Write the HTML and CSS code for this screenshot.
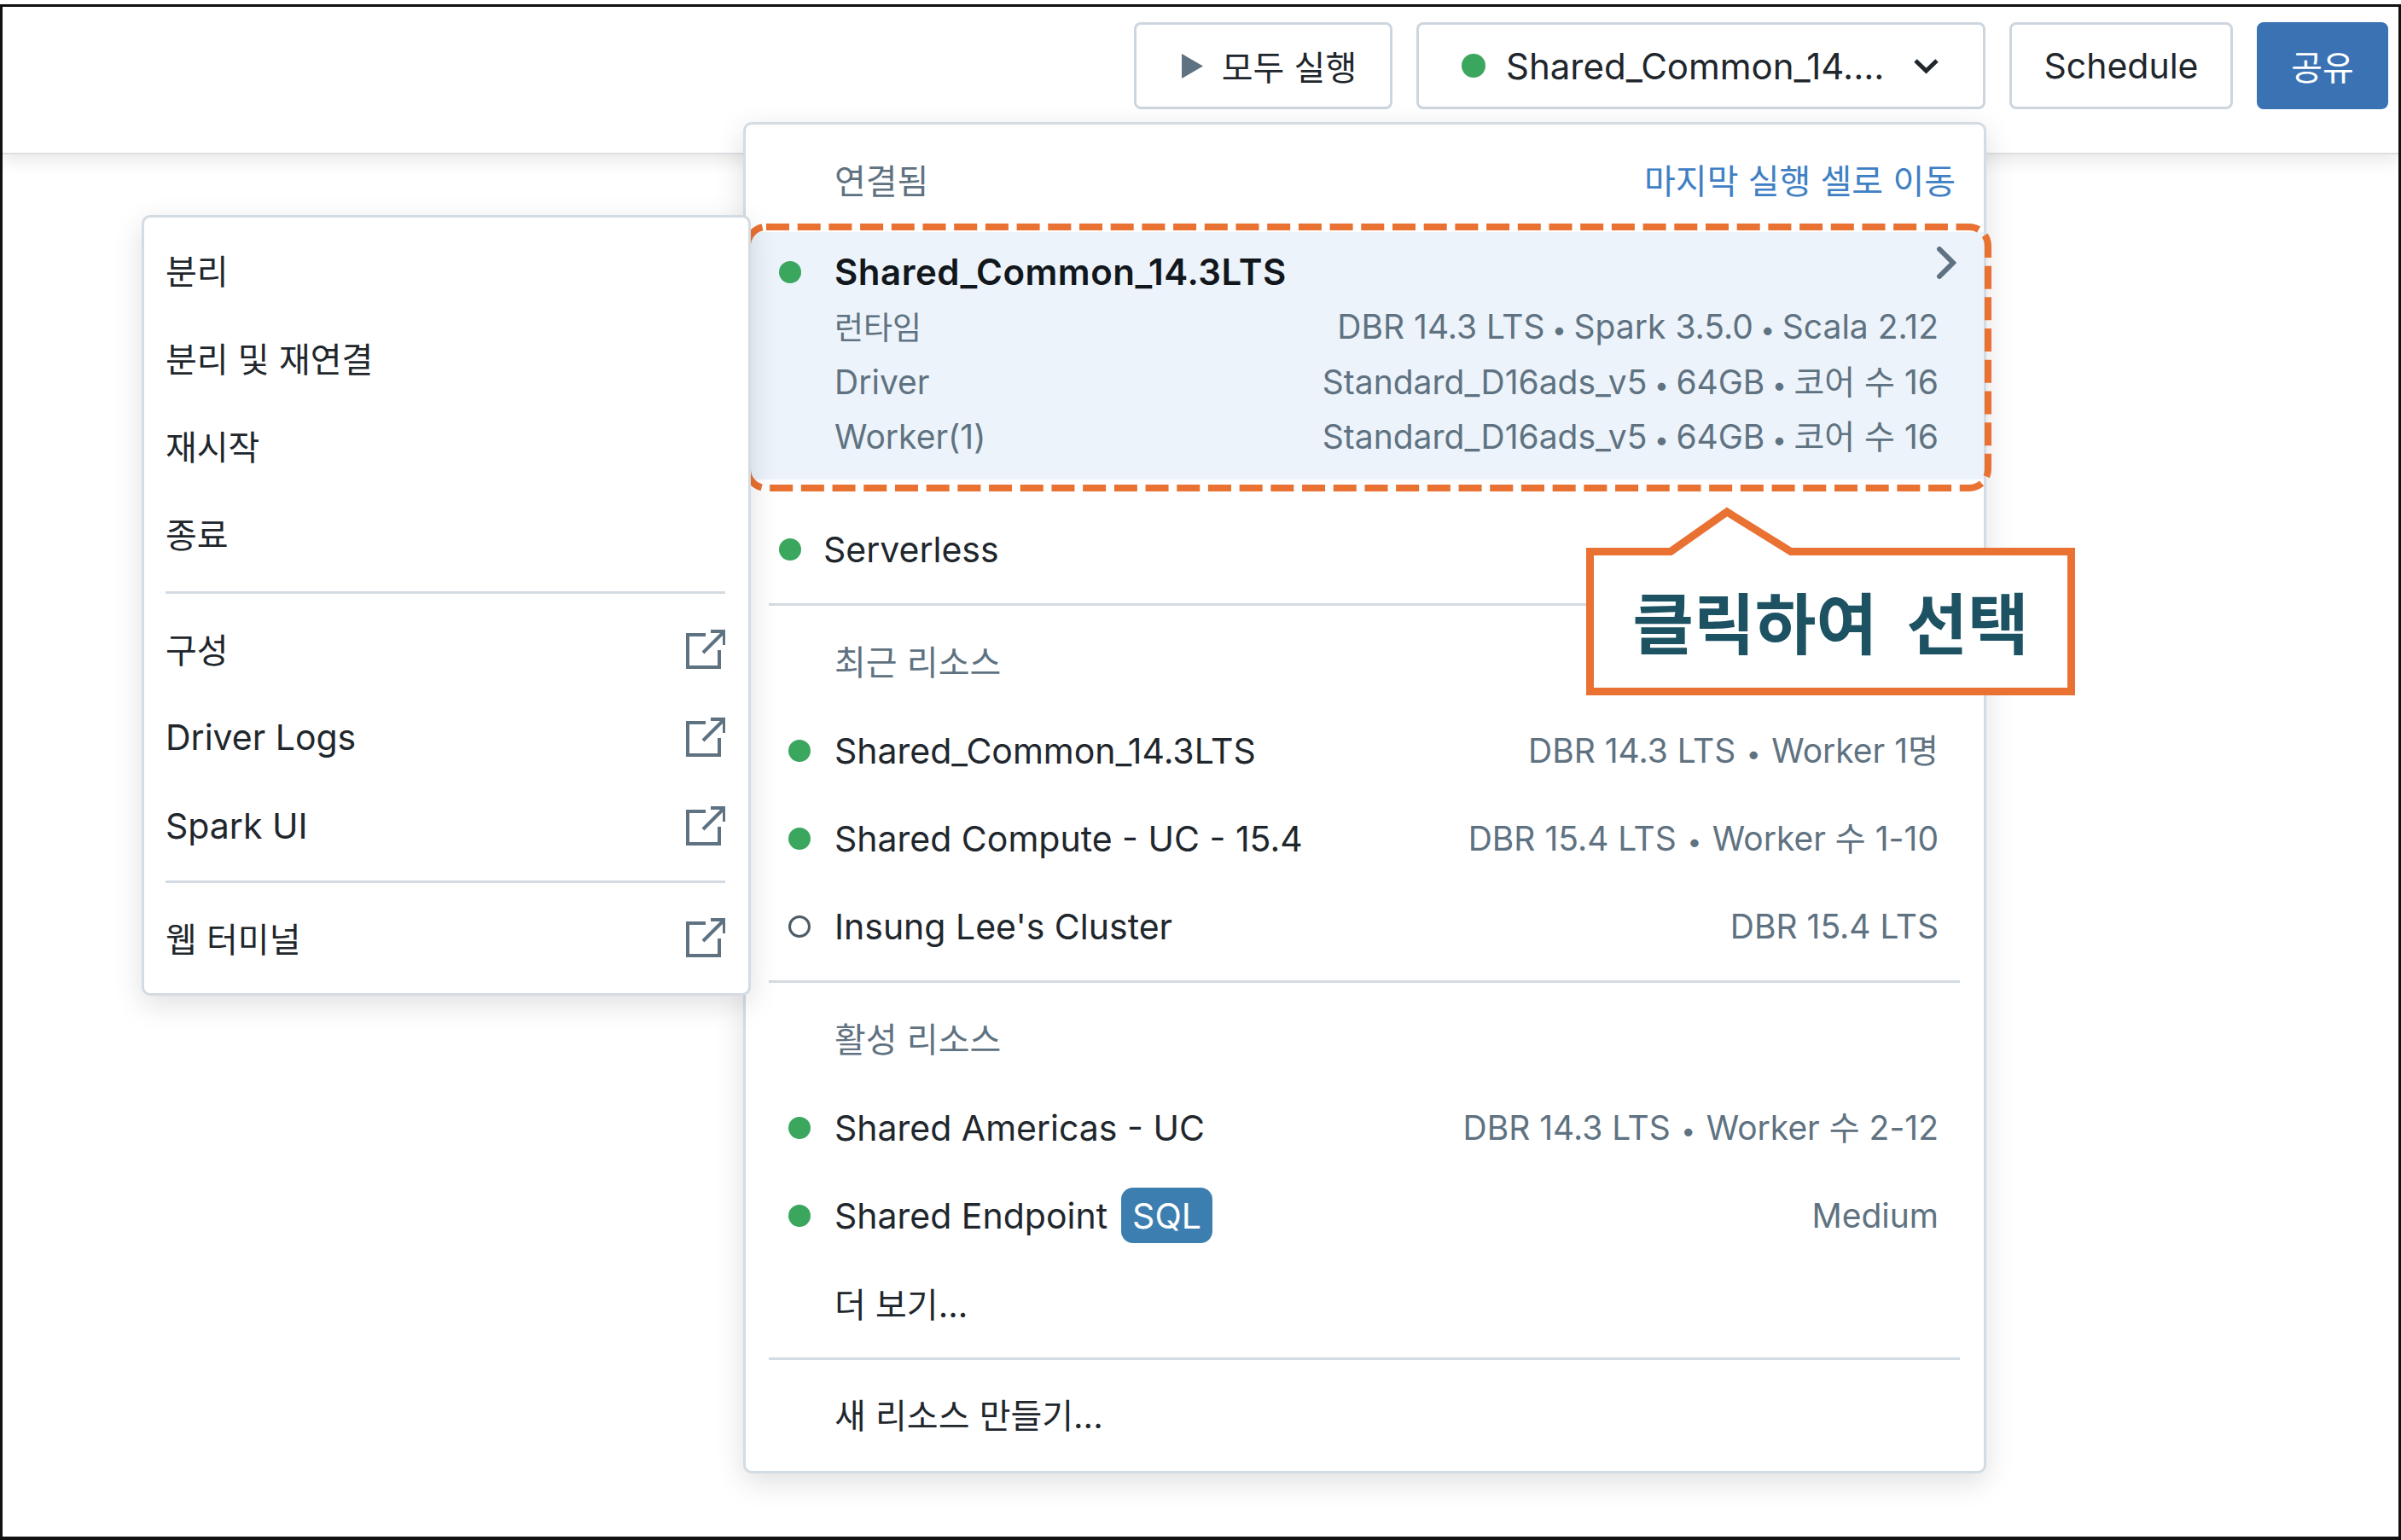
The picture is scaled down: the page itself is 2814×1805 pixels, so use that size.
FILE: index.html
```html
<!DOCTYPE html>
<html lang="ko">
<head>
    <meta charset="UTF-8">
    <title>클러스터 선택</title>
    <link rel="stylesheet" href="styles.css">
</head>
<body>
    <div class="frame">
        <div class="topbar">
            <button class="btn btn-run">
                <svg class="play" width="25" height="29" viewBox="0 0 25 29"><path d="M0 0 L25 14.5 L0 29 Z"/></svg>
                모두 실행
            </button>
            <button class="btn btn-cluster">
                <span class="dot dot-top"></span>
                <span class="cluster-name">Shared_Common_14....</span>
                <svg class="chevron-down" width="31" height="19" viewBox="0 0 31 19"><path d="M3 3 L15.5 15 L28 3"/></svg>
            </button>
            <button class="btn btn-schedule">Schedule</button>
            <button class="btn btn-share">공유</button>
        </div>

        <!-- 왼쪽 서브 메뉴 -->
        <div class="submenu">
            <div class="sub-row ko">분리</div>
            <div class="sub-row ko">분리 및 재연결</div>
            <div class="sub-row ko">재시작</div>
            <div class="sub-row ko">종료</div>
            <hr class="sub-line">
            <div class="sub-row sub-link"><span class="ko">구성</span>
                <svg class="ext" viewBox="0 0 46 46"><path d="M23 6 H2 V44 H39 V24"/><path d="M20 27 L44 3 M29 2 H45 V18"/></svg>
            </div>
            <div class="sub-row sub-link">Driver Logs
                <svg class="ext" viewBox="0 0 46 46"><path d="M23 6 H2 V44 H39 V24"/><path d="M20 27 L44 3 M29 2 H45 V18"/></svg>
            </div>
            <div class="sub-row sub-link">Spark UI
                <svg class="ext" viewBox="0 0 46 46"><path d="M23 6 H2 V44 H39 V24"/><path d="M20 27 L44 3 M29 2 H45 V18"/></svg>
            </div>
            <hr class="sub-line sub-line-2">
            <div class="sub-row sub-link"><span class="ko">웹 터미널</span>
                <svg class="ext" viewBox="0 0 46 46"><path d="M23 6 H2 V44 H39 V24"/><path d="M20 27 L44 3 M29 2 H45 V18"/></svg>
            </div>
        </div>

        <!-- 리소스 드롭다운 -->
        <div class="dropdown">
            <div class="section-label label-first">
                <span>연결됨</span>
                <span class="jump-link">마지막 실행 셀로 이동</span>
            </div>
            <div class="selected">
                <div class="sel-title">
                    <span class="dot dot-sel"></span>
                    <span>Shared_Common_14.3LTS</span>
                    <svg class="chevron-right" width="24" height="38" viewBox="0 0 24 38"><path d="M4 3 L20 19 L4 35"/></svg>
                </div>
                <div class="sel-info"><span class="runtime">런타임</span><span>DBR 14.3 LTS<i class="sep">•</i>Spark 3.5.0<i class="sep">•</i>Scala 2.12</span></div>
                <div class="sel-info"><span>Driver</span><span>Standard_D16ads_v5<i class="sep">•</i>64GB<i class="sep">•</i>코어 수 16</span></div>
                <div class="sel-info"><span>Worker(1)</span><span>Standard_D16ads_v5<i class="sep">•</i>64GB<i class="sep">•</i>코어 수 16</span></div>
                <svg class="dash-box" width="1474" height="326" viewBox="0 0 1474 326"><rect x="4" y="4" width="1454" height="306" rx="22"/></svg>
            </div>
            <div class="row row-serverless"><span class="dot dot-sel"></span><span>Serverless</span></div>
            <hr class="line">

            <div class="section-label"><span>최근 리소스</span></div>
            <div class="row"><span class="dot"></span><span>Shared_Common_14.3LTS</span><span class="meta">DBR 14.3 LTS<i class="sep sep-wide">•</i>Worker 1명</span></div>
            <div class="row"><span class="dot"></span><span>Shared Compute - UC - 15.4</span><span class="meta">DBR 15.4 LTS<i class="sep sep-wide">•</i>Worker 수 1-10</span></div>
            <div class="row"><span class="dot dot-off"></span><span>Insung Lee's Cluster</span><span class="meta">DBR 15.4 LTS</span></div>
            <hr class="line">

            <div class="section-label"><span>활성 리소스</span></div>
            <div class="row"><span class="dot"></span><span>Shared Americas - UC</span><span class="meta">DBR 14.3 LTS<i class="sep sep-wide">•</i>Worker 수 2-12</span></div>
            <div class="row"><span class="dot"></span><span>Shared Endpoint</span><span class="badge">SQL</span><span class="meta">Medium</span></div>
            <div class="row row-plain ko">더 보기...</div>
            <hr class="line">
            <div class="row row-plain ko">새 리소스 만들기...</div>
        </div>

        <!-- 안내 말풍선 -->
        <div class="callout">
            <svg class="callout-shape" width="578" height="230" viewBox="0 0 578 230">
                <path d="M5.5 57.5 H100 L166 11 L241 57.5 H569.5 V221.5 H5.5 Z"/>
            </svg>
            <span class="callout-text">클릭하여 선택</span>
        </div>
    </div>
</body>
</html>
```

FILE: styles.css
```css
html, body {
    margin: 0;
    padding: 0;
    background-color: #ffffff;
}

body {
    font-family: Inter, "Noto Sans CJK KR", sans-serif;
    font-size: 41px;
    line-height: 50px;
    color: #1f272d;
    overflow: hidden;
}

/* hangul sits a little high next to the latin text */
.ko {
    box-sizing: border-box;
    padding-top: 5px;
    font-size: 40px;
}

.frame {
    position: relative;
    box-sizing: border-box;
    width: 2814px;
    height: 1800px;
    margin-top: 5px;
    border: 3px solid #111111;
    border-bottom-width: 4px;
    overflow: hidden;
}

/* top bar */
.topbar {
    display: flex;
    justify-content: flex-end;
    gap: 28px;
    box-sizing: border-box;
    height: 173px;
    padding: 18px 12px 0 0;
    background-color: #ffffff;
    border-bottom: 2px solid #dcdfe3;
    box-shadow: 0 8px 18px rgba(0, 0, 0, 0.09);
}

.btn {
    display: flex;
    align-items: center;
    justify-content: center;
    box-sizing: border-box;
    height: 102px;
    border: 3px solid #cdd6df;
    border-radius: 8px;
    background-color: #ffffff;
    color: #1f272d;
    font-family: inherit;
    font-size: 40px;
}

.btn-run { width: 303px; gap: 22px; padding-left: 20px; }
.btn-cluster { width: 667px; padding-left: 50px; justify-content: flex-start; }
.btn-schedule { width: 262px; font-size: 41px; }
.btn-share {
    width: 154px;
    border-color: #3a72b4;
    background-color: #3a72b4;
    color: #ffffff;
}

.play { fill: #5f7281; }
.cluster-name { margin-left: 24px; font-size: 42px; }

.chevron-down {
    margin-left: 34px;
    fill: none;
    stroke: #1f272d;
    stroke-width: 5;
}

.dot {
    flex: none;
    box-sizing: border-box;
    width: 26px;
    height: 26px;
    margin: 0 28px 0 50px;
    border-radius: 50%;
    background-color: #3ba65e;
}

.dot-top { width: 28px; height: 28px; margin: 0; }
.dot-sel { margin: 0 0 0 39px; }

.dot-off {
    background-color: transparent;
    border: 3px solid #4c5c68;
}

/* left menu */
.submenu {
    position: absolute;
    left: 163px;
    top: 244px;
    box-sizing: border-box;
    width: 714px;
    height: 915px;
    padding: 10px 27px 0 25px;
    background-color: #ffffff;
    border: 3px solid #d3dbe3;
    border-radius: 10px;
    box-shadow: 0 10px 34px rgba(0, 0, 0, 0.13);
    z-index: 2;
}

.sub-row {
    display: flex;
    align-items: center;
    justify-content: space-between;
    height: 103px;
}

.sub-link { height: 103.5px; }

.sub-line {
    height: 3px;
    margin: 16px 0 13px;
    border: none;
    background-color: #d3dbe3;
}

.sub-line-2 { margin: 12px 0 13px; }

.ext {
    width: 46px;
    height: 46px;
    fill: none;
    stroke: #5f7281;
    stroke-width: 4;
}

/* main dropdown */
.dropdown {
    position: absolute;
    left: 868px;
    top: 135px;
    box-sizing: border-box;
    width: 1457px;
    height: 1584px;
    padding-top: 33px;
    background-color: #ffffff;
    border: 3px solid #d3dbe3;
    border-radius: 10px;
    box-shadow: 0 10px 34px rgba(0, 0, 0, 0.13);
    z-index: 1;
}

.section-label {
    display: flex;
    align-items: center;
    justify-content: space-between;
    box-sizing: border-box;
    height: 62px;
    margin-bottom: 23px;
    padding: 5px 33px 0 104px;
    font-size: 40px;
    color: #5f7281;
}

.label-first { margin-bottom: 31px; }

.jump-link { color: #3f80c4; }

.selected {
    position: relative;
    box-sizing: border-box;
    height: 290px;
    padding: 15px 53px 0 0;
    background-color: #ecf3fa;
}

.sel-title {
    display: flex;
    align-items: center;
    height: 64px;
    font-size: 42px;
    font-weight: 600;
    letter-spacing: 0.5px;
    color: #11171c;
}

.sel-title span + span { margin-left: 39px; }
.sel-title .dot { margin-right: 0; }

.chevron-right {
    margin-left: auto;
    margin-right: -21px;
    margin-top: -22px;
    fill: none;
    stroke: #5f7281;
    stroke-width: 6;
    stroke-linecap: round;
}

.sel-info {
    display: flex;
    justify-content: space-between;
    align-items: center;
    height: 64.5px;
    padding-left: 104px;
    font-size: 39px;
    color: #5f7281;
}

.runtime { padding-top: 3px; font-size: 37px; }

.sep {
    display: inline-block;
    width: 34px;
    font-size: 30px;
    line-height: 1;
    font-style: normal;
    text-align: center;
}

.sep-wide { width: 42px; }

.dash-box {
    position: absolute;
    left: -2px;
    top: -10px;
    fill: none;
    stroke: #e97132;
    stroke-width: 8;
    stroke-dasharray: 27 9.7;
}

.row {
    display: flex;
    align-items: center;
    height: 103px;
    padding-right: 53px;
}

.row-serverless { margin-top: 30px; }
.row-serverless .dot { margin-right: 26px; }
.row-plain { padding-left: 104px; }

.line {
    height: 3px;
    margin: 12px 28px 33px 27px;
    border: none;
    background-color: #d3dbe3;
}

.line:last-of-type { margin-bottom: 12px; }

.meta {
    margin-left: auto;
    font-size: 39px;
    color: #5f7281;
}

.badge {
    display: flex;
    align-items: center;
    height: 65px;
    margin-left: 16px;
    padding: 0 13px;
    border-radius: 14px;
    background-color: #3d7eb0;
    color: #ffffff;
}

/* callout */
.callout {
    position: absolute;
    left: 1855px;
    top: 581px;
    display: flex;
    align-items: center;
    justify-content: center;
    width: 578px;
    height: 230px;
    padding: 45px 3px 0 0;
    box-sizing: border-box;
    z-index: 3;
}

.callout-shape {
    position: absolute;
    left: 0;
    top: 0;
    fill: #ffffff;
    stroke: #e97132;
    stroke-width: 9;
}

.callout-text {
    position: relative;
    font-family: "Noto Sans CJK KR", sans-serif;
    font-size: 78px;
    font-weight: 700;
    word-spacing: 12px;
    color: #1d5263;
}
```
